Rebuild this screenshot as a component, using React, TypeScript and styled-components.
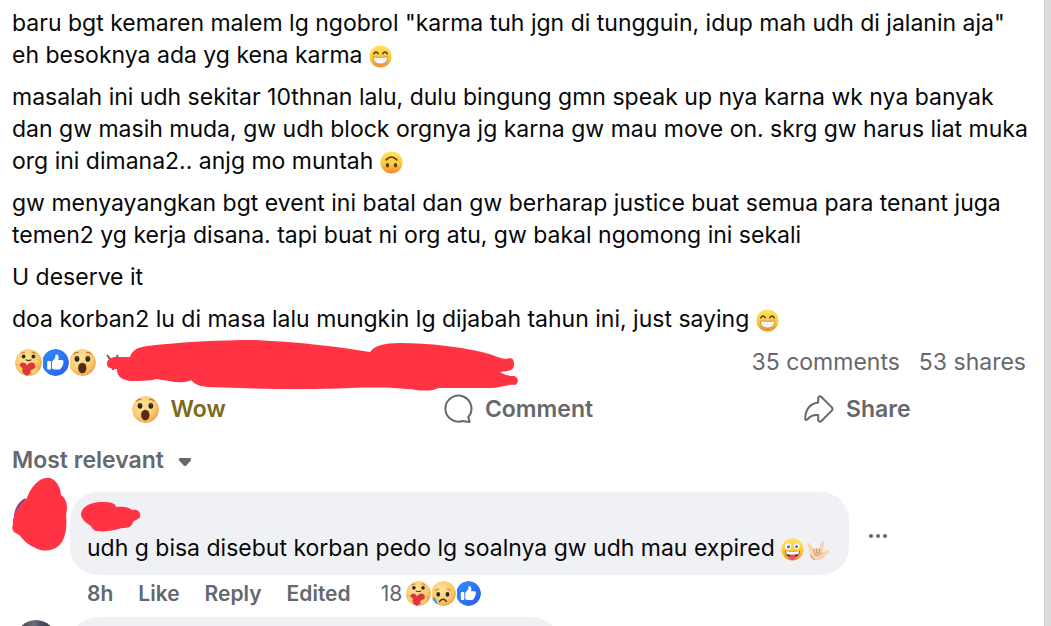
import React from "react";
import styled, { createGlobalStyle } from "styled-components";

const GlobalStyle = createGlobalStyle`
  * { box-sizing: border-box; }
  body {
    margin: 0;
    background: #ffffff;
    color: #080809;
    font-family: Inter, "Liberation Sans", sans-serif;
  }
  button {
    border: 0;
    padding: 0;
    background: none;
    color: inherit;
    font: inherit;
    cursor: pointer;
  }
`;

const RED = "#ff3344";

const Page = styled.div`
  display: flex;
  height: 100vh;
  overflow: hidden;
`;

const Post = styled.main`
  flex: 1;
  min-width: 0;
  padding: 7px 0 0 12px;
`;

const Gutter = styled.div`
  flex: none;
  width: 7px;
  background: #dcdcdd;
  border-left: 1px solid #cfcfd1;
`;

const Story = styled.article`
  display: flex;
  flex-direction: column;
  gap: 10px;
  padding-bottom: 3px;
  font-size: 23px;
  line-height: 32px;
`;

const Paragraph = styled.p`
  margin: 0;
`;

const InlineEmoji = styled.svg`
  width: 23px;
  height: 23px;
  vertical-align: -5px;
`;

const Stats = styled.div`
  position: relative;
  display: flex;
  align-items: center;
  justify-content: space-between;
  height: 48px;
  padding: 0 18px 0 3px;
  color: #65686c;
  font-size: 23px;
`;

const Faces = styled.span`
  display: flex;
`;

const Face = styled.svg<{ $order: number; $size: number }>`
  position: relative;
  z-index: ${(p) => p.$order};
  width: ${(p) => p.$size}px;
  height: ${(p) => p.$size}px;
  border-radius: 50%;
  box-shadow: 0 0 0 1px #ffffff;
`;

const Counts = styled.div`
  display: flex;
  gap: 19px;
`;

const NameMark = styled.svg`
  position: absolute;
  left: 92px;
  top: 0;
  width: 416px;
  height: 56px;
`;

const Actions = styled.div`
  display: grid;
  grid-template-columns: repeat(3, 1fr);
  height: 46px;
  margin: 0 17px 0 -3px;
  color: #65686c;
  font-size: 23px;
  font-weight: 600;
`;

const Action = styled.button<{ $color?: string }>`
  display: flex;
  align-items: center;
  justify-content: center;
  gap: 12px;
  color: ${(p) => p.$color ?? "inherit"};
`;

const ActionIcon = styled.svg`
  width: 30px;
  height: 30px;
`;

const SortButton = styled.button`
  display: flex;
  align-items: center;
  gap: 14px;
  height: 56px;
  color: #65686c;
  font-size: 23px;
  font-weight: 600;
`;

const Caret = styled.svg`
  width: 14px;
  height: 10px;
  margin-top: 3px;
`;

const CommentRow = styled.section`
  display: flex;
  align-items: flex-start;
  gap: 2px;
  padding-top: 4px;
`;

const AvatarMark = styled.svg`
  flex: none;
  width: 56px;
  height: 76px;
  margin-top: -16px;
`;

const CommentBody = styled.div`
  display: flex;
  flex-direction: column;
`;

const BubbleLine = styled.div`
  display: flex;
  align-items: center;
  gap: 18px;
`;

const Bubble = styled.div`
  padding: 8px 19px 11px 17px;
  border-radius: 28px;
  background: #f0f1f5;
  font-size: 23px;
  line-height: 32px;
`;

const BubbleEmojis = styled.span`
  display: inline-flex;
  gap: 3px;
  vertical-align: -5px;
`;

const AuthorMark = styled.svg`
  display: block;
  width: 64px;
  height: 32px;
  margin-left: -9px;
`;

const MoreButton = styled.button`
  display: flex;
  gap: 3px;
  padding: 8px 2px 4px;
`;

const Dot = styled.i`
  width: 4px;
  height: 4px;
  border-radius: 50%;
  background: #65686c;
`;

const Meta = styled.div`
  display: flex;
  align-items: center;
  gap: 25px;
  height: 37px;
  padding-left: 17px;
  color: #65686c;
  font-size: 21px;
  font-weight: 600;
`;

const Tally = styled.span`
  display: flex;
  align-items: center;
  gap: 4px;
  margin-left: 5px;
  font-weight: 400;
`;

const NextComment = styled.section`
  display: flex;
  gap: 14px;
  padding: 5px 0 0 4px;
`;

const NextAvatar = styled.div`
  flex: none;
  width: 40px;
  height: 40px;
  margin-top: 3px;
  border-radius: 50%;
  background: linear-gradient(90deg, #34332f, #6d7079 45%, #4a5166 60%, #2f2f2e);
`;

const NextBubble = styled.div`
  width: 50%;
  max-width: 490px;
  height: 80px;
  border-radius: 28px;
  background: #f0f1f5;
`;

function FaceGradient({ id }: { id: string }) {
  return (
    <defs>
      <radialGradient id={id} cx="0.4" cy="0.35" r="0.7">
        <stop offset="0" stopColor="#ffe39a" />
        <stop offset="0.65" stopColor="#f9cb6e" />
        <stop offset="1" stopColor="#eb9f48" />
      </radialGradient>
    </defs>
  );
}

function YellowGradient({ id }: { id: string }) {
  return (
    <defs>
      <linearGradient id={id} x1="0" y1="0" x2="0" y2="1">
        <stop offset="0" stopColor="#ffe45a" />
        <stop offset="0.6" stopColor="#fcc63c" />
        <stop offset="1" stopColor="#f08a2c" />
      </linearGradient>
    </defs>
  );
}

function Grin() {
  const id = React.useId();
  return (
    <InlineEmoji viewBox="0 0 24 24" role="img" aria-label="beaming face">
      <YellowGradient id={id} />
      <circle cx="12" cy="12" r="11.5" fill={`url(#${id})`} />
      <path d="M5 9.3Q7.2 5.6 9.6 9.1M14.4 9.1Q16.8 5.6 19 9.3" fill="none" stroke="#5a3310" strokeWidth="1.5" strokeLinecap="round" />
      <path d="M4.6 12.4Q12 13.6 19.4 12.4Q19.6 19.8 12 19.8T4.6 12.4Z" fill="#fff" stroke="#9b7a55" strokeWidth="0.7" />
      <path d="M5.2 16H18.8M8.5 13V19M12 13V19.6M15.5 13V19" stroke="#d6d2cc" strokeWidth="0.4" />
    </InlineEmoji>
  );
}

function UpsideDown() {
  const id = React.useId();
  return (
    <InlineEmoji viewBox="0 0 24 24" role="img" aria-label="upside-down face">
      <YellowGradient id={id} />
      <circle cx="12" cy="12" r="11.5" fill={`url(#${id})`} />
      <path d="M6.4 9.2Q12 3.4 17.6 9.2" fill="none" stroke="#5f3a12" strokeWidth="1.7" strokeLinecap="round" />
      <ellipse cx="7.8" cy="14.8" rx="1.7" ry="2.3" fill="#5f3a12" />
      <ellipse cx="16.2" cy="14.8" rx="1.7" ry="2.3" fill="#5f3a12" />
    </InlineEmoji>
  );
}

function Zany() {
  const id = React.useId();
  return (
    <InlineEmoji viewBox="0 0 24 24" role="img" aria-label="zany face">
      <YellowGradient id={id} />
      <circle cx="12" cy="12" r="11.5" fill={`url(#${id})`} />
      <circle cx="7.4" cy="8.8" r="3.2" fill="#fff" />
      <circle cx="16.4" cy="8.6" r="2.9" fill="#fff" />
      <circle cx="7.8" cy="9.2" r="1.6" fill="#4668a0" />
      <circle cx="16.2" cy="9" r="1.5" fill="#4668a0" />
      <path d="M4.2 13.2Q12 14.6 19.8 13.2Q19 20.4 12 20.4T4.2 13.2Z" fill="#5c2d18" />
      <path d="M5 13.5Q12 14.8 19 13.5L18.2 17Q12 17.8 5.8 17Z" fill="#fff" />
      <path d="M9 18.2Q12 17 15 18.2V20.6Q14.6 23.2 12 23.2T9 20.6Z" fill="#ee4f6c" />
    </InlineEmoji>
  );
}

function LoveHand() {
  return (
    <InlineEmoji viewBox="0 0 24 24" role="img" aria-label="love-you gesture">
      <path
        d="M0.6 6Q1.6 4.4 3 5.8L7 11.4Q8.6 10 10.2 11Q12 10 13.2 11L15.2 3.4Q16.6 1.6 17.8 3.6L16.6 15L21 12.6Q24.2 12 23.4 14.6L17 20.8Q14 23.8 8.6 23Q4 22 3.4 17.2Z"
        fill="#f8d5b2"
      />
      <path d="M7 11.6L7.8 15.8Q9.4 17 10.4 15.2L10 11M10.4 15.2Q12.4 16.6 13 14.6V11M7.4 17.6Q11 19.4 16 15.4M3.6 17.4Q4.4 22 8.6 22.8" fill="none" stroke="#c98f5e" strokeWidth="1" />
    </InlineEmoji>
  );
}

type FaceProps = { order: number; size?: number };

function Care({ order, size = 27 }: FaceProps) {
  const id = React.useId();
  return (
    <Face $order={order} $size={size} viewBox="0 0 27 27" role="img" aria-label="Care">
      <FaceGradient id={id} />
      <circle cx="13.5" cy="13.5" r="13.5" fill={`url(#${id})`} />
      <path d="M6 4.4Q7.6 2.8 9.6 3.2M17 3.2Q19 2.8 20.6 4.4" fill="none" stroke="#b97831" strokeWidth="1" strokeLinecap="round" />
      <ellipse cx="8.6" cy="7.4" rx="1.9" ry="2" fill="#35271b" />
      <ellipse cx="18.4" cy="7.4" rx="1.9" ry="2" fill="#35271b" />
      <path d="M11 10.8Q13.5 12.4 16 10.8" fill="none" stroke="#5b3515" strokeWidth="1.1" strokeLinecap="round" />
      <path d="M11.8 16.4Q14.6 12.4 18.4 13.8Q21.6 15.8 19.4 20Q16.4 24.6 11.4 27Q6.4 23.4 4.6 18.8Q4 14.2 7.8 13.6Q11 13.6 11.8 16.4Z" fill="#e2313f" />
      <path d="M0.6 17Q1.4 14.4 3.4 15.8L7 18.6Q8.6 20.2 6.8 20.8Q9 23.4 6.4 24.2Q1.6 21.6 0.6 17Z" fill="#fbd077" stroke="#dd9538" strokeWidth="0.6" />
      <path d="M24 17.6Q21.8 16.8 20 19.2L16.2 21Q14.4 22.4 15.8 23.8Q15.2 26 17.8 25.8Q22.8 24.2 24 17.6Z" fill="#fbd077" stroke="#dd9538" strokeWidth="0.6" />
    </Face>
  );
}

function Like({ order, size = 27 }: FaceProps) {
  const id = React.useId();
  return (
    <Face $order={order} $size={size} viewBox="0 0 27 27" role="img" aria-label="Like">
      <defs>
        <linearGradient id={id} x1="0" y1="0" x2="1" y2="1">
          <stop offset="0" stopColor="#2f8ff8" />
          <stop offset="1" stopColor="#2b5df0" />
        </linearGradient>
      </defs>
      <circle cx="13.5" cy="13.5" r="13.5" fill={`url(#${id})`} />
      <rect x="5.2" y="12" width="3.8" height="8.6" rx="1.1" fill="#fff" />
      <path d="M10 12.6L13.2 9Q13.4 7.6 13.2 6.4Q13.8 5 15.2 5.6Q17.4 6.8 16.2 11H20Q21.8 11.2 21.4 13Q21.8 14 21 15Q21.2 16.4 20.2 17Q20.2 18.4 19.2 18.8Q19 20.6 17 20.6H13Q11.2 20.4 10 19.6Z" fill="#fff" />
    </Face>
  );
}

function Wow({ order, size = 27 }: FaceProps) {
  const id = React.useId();
  return (
    <Face $order={order} $size={size} viewBox="0 0 27 27" role="img" aria-label="Wow">
      <FaceGradient id={id} />
      <circle cx="13.5" cy="13.5" r="13.5" fill={`url(#${id})`} />
      <path d="M4.8 5.2Q6.4 3 9 3.6M17.6 3.6Q20.4 3 22 5.2" fill="none" stroke="#b97831" strokeWidth="1.2" strokeLinecap="round" />
      <ellipse cx="8" cy="9.8" rx="2.4" ry="2.9" fill="#2b2520" />
      <ellipse cx="18.8" cy="9.8" rx="2.4" ry="2.9" fill="#2b2520" />
      <circle cx="8.2" cy="8.6" r="0.7" fill="#8b7f73" />
      <circle cx="19" cy="8.6" r="0.7" fill="#8b7f73" />
      <ellipse cx="13.3" cy="19" rx="4.2" ry="5.3" fill="#572a13" />
    </Face>
  );
}

function Sad({ order, size = 27 }: FaceProps) {
  const id = React.useId();
  return (
    <Face $order={order} $size={size} viewBox="0 0 27 27" role="img" aria-label="Sad">
      <FaceGradient id={id} />
      <circle cx="13.5" cy="13.5" r="13.5" fill={`url(#${id})`} />
      <path d="M4.8 10.4Q6 8.4 8.6 8.6M17.4 8.6Q20 8.4 21 10.4" fill="none" stroke="#b97831" strokeWidth="1.1" strokeLinecap="round" />
      <ellipse cx="7.8" cy="14.4" rx="2" ry="2.5" fill="#2f2820" />
      <ellipse cx="17.8" cy="14.4" rx="2" ry="2.5" fill="#2f2820" />
      <path d="M9.4 22Q13 17.6 16.6 22" fill="none" stroke="#4b2e16" strokeWidth="1.6" strokeLinecap="round" />
      <path d="M3.2 16.8Q7.6 21.6 6.4 25Q3.8 28 1 25Q-0.4 22 3.2 16.8Z" fill="#4ba8e6" />
    </Face>
  );
}

export default function App() {
  return (
    <>
      <GlobalStyle />
      <Page>
        <Post>
          <Story>
            <Paragraph>
              baru bgt kemaren malem lg ngobrol "karma tuh jgn di tungguin, idup mah udh di jalanin aja"
              <br />
              eh besoknya ada yg kena karma <Grin />
            </Paragraph>
            <Paragraph>
              masalah ini udh sekitar 10thnan lalu, dulu bingung gmn speak up nya karna wk nya banyak
              <br />
              dan gw masih muda, gw udh block orgnya jg karna gw mau move on. skrg gw harus liat muka
              <br />
              org ini dimana2.. anjg mo muntah <UpsideDown />
            </Paragraph>
            <Paragraph>
              gw menyayangkan bgt event ini batal dan gw berharap justice buat semua para tenant juga
              <br />
              temen2 yg kerja disana. tapi buat ni org atu, gw bakal ngomong ini sekali
            </Paragraph>
            <Paragraph>U deserve it</Paragraph>
            <Paragraph>
              doa korban2 lu di masa lalu mungkin lg dijabah tahun ini, just saying <Grin />
            </Paragraph>
          </Story>

          <Stats>
            <Faces>
              <Care order={3} />
              <Like order={2} />
              <Wow order={1} />
            </Faces>
            <NameMark viewBox="104 338 416 56" aria-hidden="true">
              <path d="M107 355L113 363M118 355L113 363V370" fill="none" stroke="#65686c" strokeWidth="2" />
              <path
                d="M107 364C107 359 111 357 116 357H130C132 350 138 347 148 346C180 342 220 340 255 340C300 342 340 347 370 352C374 346 384 343 400 343C430 343 460 347 482 352C494 355 501 359 506 359C512 357 514 359 514 364C514 370 511 371 500 372C505 375 508 376 514 376C519 377 519 383 515 385C508 384 500 388 490 388H438C434 391 424 391 416 390C400 388 380 387 350 388C310 390 260 389 208 387C198 386 195 384 191 380C184 384 174 382 157 379C148 381 140 381 130 381C120 379 117 376 117 369C111 369 107 368 107 364Z"
                fill={RED}
              />
            </NameMark>
            <Counts>
              <span>35 comments</span>
              <span>53 shares</span>
            </Counts>
          </Stats>

          <Actions>
            <Action $color="#7e6a1c">
              <Wow order={1} />
              Wow
            </Action>
            <Action>
              <ActionIcon viewBox="0 0 30 30" aria-hidden="true">
                <path d="M25.2 23.2A13 13 0 1 0 19.4 27Q22.6 27.6 26.6 27.9Q26.4 25.6 25.2 23.2Z" fill="none" stroke="#65686c" strokeWidth="2" strokeLinejoin="round" />
              </ActionIcon>
              Comment
            </Action>
            <Action>
              <ActionIcon viewBox="0 0 30 30" aria-hidden="true">
                <path d="M14.2 8.6V3.8Q15 1.4 17.2 2.8L28 13.6Q29 15 28 16.4L17.2 27.2Q15 28.6 14.2 26.2V21Q7.2 20.4 3.2 25.6Q1.4 26.6 1.2 24.8Q1.8 10.4 14.2 8.6Z" fill="none" stroke="#65686c" strokeWidth="2" strokeLinejoin="round" />
              </ActionIcon>
              Share
            </Action>
          </Actions>

          <SortButton>
            Most relevant
            <Caret viewBox="0 0 14 10" aria-hidden="true">
              <path d="M1.8 1H12.2Q14 1.6 12.8 3.4L8.4 8.4Q7 9.6 5.6 8.4L1.2 3.4Q0 1.6 1.8 1Z" fill="#65686c" />
            </Caret>
          </SortButton>

          <CommentRow>
            <AvatarMark viewBox="11 477 57 76" aria-hidden="true">
              <path d="M13 516Q15 504 24 499L30 506L18 520Z" fill="#6b4c92" />
              <path d="M47 478C55 478 60 486 61 496C67 500 68 508 66 516C67 528 66 540 59 547C52 553 42 554 34 549C26 546 22 540 18 536C12 534 10 530 12 526C11 516 17 507 26 499C30 488 38 478 47 478Z" fill={RED} />
            </AvatarMark>
            <CommentBody>
              <BubbleLine>
                <Bubble>
                  <AuthorMark viewBox="78 500 64 32" aria-hidden="true">
                    <path d="M81 514C82 506 92 502 102 502C110 502 116 503 116 507C124 506 130 508 132 510C138 509 141 512 140 517C138 520 135 520 133 522C132 527 128 528 122 528C112 531 104 532 96 531C93 530 92 528 91 526C86 523 81 519 81 514Z" fill={RED} />
                  </AuthorMark>
                  udh g bisa disebut korban pedo lg soalnya gw udh mau expired{" "}
                  <BubbleEmojis>
                    <Zany />
                    <LoveHand />
                  </BubbleEmojis>
                </Bubble>
                <MoreButton aria-label="More options">
                  <Dot />
                  <Dot />
                  <Dot />
                </MoreButton>
              </BubbleLine>
              <Meta>
                <span>8h</span>
                <button>Like</button>
                <button>Reply</button>
                <button>Edited</button>
                <Tally>
                  18
                  <Faces>
                    <Care order={3} size={25} />
                    <Sad order={2} size={25} />
                    <Like order={1} size={25} />
                  </Faces>
                </Tally>
              </Meta>
            </CommentBody>
          </CommentRow>

          <NextComment>
            <NextAvatar />
            <NextBubble />
          </NextComment>
        </Post>
        <Gutter />
      </Page>
    </>
  );
}
